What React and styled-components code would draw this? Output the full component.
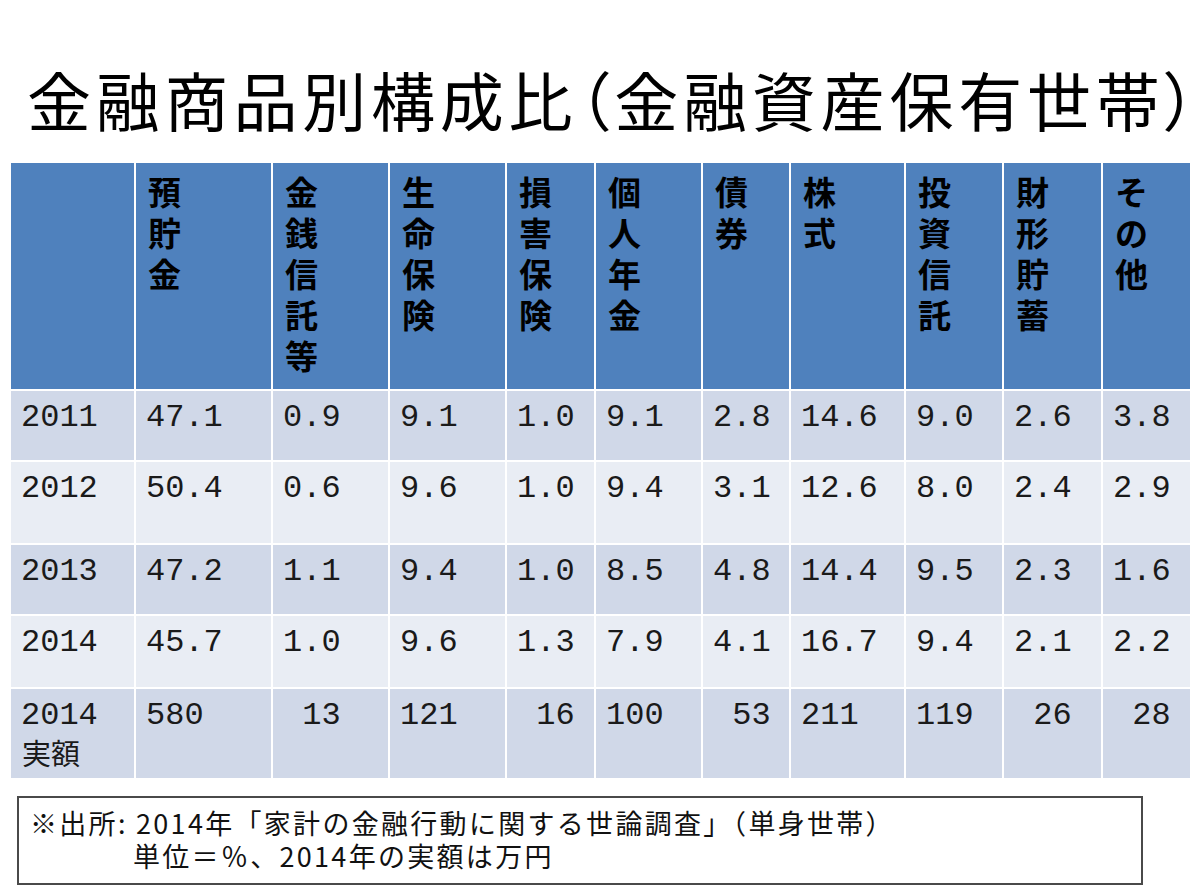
import React from "react";
import styled, { createGlobalStyle } from "styled-components";

const GlobalStyle = createGlobalStyle`
  html, body { margin: 0; padding: 0; background: #ffffff; }
  body { font-family: "Noto Sans CJK JP", "Noto Sans", sans-serif; color: #000; }
`;

const Page = styled.div`
  width: 1200px;
  height: 893px;
  overflow: hidden;
  display: flex;
  flex-direction: column;
`;

const Title = styled.h1`
  margin: 0 0 33px 0;
  padding: 66px 0 0 27px;
  font-family: "Noto Sans CJK JP", sans-serif;
  font-weight: 400;
  font-size: 64px;
  line-height: 64px;
  letter-spacing: 4.8px;
  font-feature-settings: "palt" 1;
  white-space: nowrap;
  color: #000;
`;

const TitleEnd = styled.span`
  letter-spacing: 0;
`;

const Table = styled.div`
  margin-left: 11px;
  width: 1179px;
  display: grid;
  grid-template-columns: 123px 135px 115px 115px 87px 105px 86px 113px 96px 97px 87px;
  grid-template-rows: 226px 69px 81px 69px 71px 89px;
  column-gap: 2px;
  row-gap: 2px;
`;

const HeadCell = styled.div`
  background: #4f81bd;
  padding: 8px 0 0 12px;
`;

const HeadLabel = styled.div`
  display: flex;
  flex-direction: column;
  font-family: "Noto Sans CJK JP", sans-serif;
  font-weight: 700;
  font-size: 33px;
  line-height: 41px;
  color: #000;
`;

const Cell = styled.div`
  background: ${(p) => (p.$band ? "#d0d8e8" : "#e9edf4")};
  padding: 9px 0 0 10px;
  font-family: "Liberation Mono", "Noto Sans CJK JP", monospace;
  font-size: 32px;
  line-height: 36px;
  white-space: pre;
  color: #1a1a1a;
`;

const SubLabel = styled.div`
  font-family: "Noto Sans CJK JP", sans-serif;
  font-size: 29px;
  line-height: 36px;
  margin-left: 1px;
`;

const Note = styled.div`
  margin: 18px 0 0 17px;
  width: 1126px;
  height: 89px;
  box-sizing: border-box;
  border: 2px solid #4a4a4a;
  padding: 8px 0 0 11px;
  font-family: "Noto Sans CJK JP", sans-serif;
  font-size: 27px;
  line-height: 33px;
  letter-spacing: 2.3px;
  color: #111;
`;

const NoteLine = styled.div`
  padding-left: ${(p) => p.$indent || 0}px;
  white-space: nowrap;
`;

const headers = ["", "預貯金", "金銭信託等", "生命保険", "損害保険", "個人年金", "債券", "株式", "投資信託", "財形貯蓄", "その他"];

const rows = [
  { year: "2011", vals: ["47.1", "0.9", "9.1", "1.0", "9.1", "2.8", "14.6", "9.0", "2.6", "3.8"] },
  { year: "2012", vals: ["50.4", "0.6", "9.6", "1.0", "9.4", "3.1", "12.6", "8.0", "2.4", "2.9"] },
  { year: "2013", vals: ["47.2", "1.1", "9.4", "1.0", "8.5", "4.8", "14.4", "9.5", "2.3", "1.6"] },
  { year: "2014", vals: ["45.7", "1.0", "9.6", "1.3", "7.9", "4.1", "16.7", "9.4", "2.1", "2.2"] },
  { year: "2014", sub: "実額", vals: ["580", " 13", "121", " 16", "100", " 53", "211", "119", " 26", " 28"] },
];

export default function App() {
  return (
    <Page>
      <GlobalStyle />
      <Title>
        金融商品別構成比（金融資産保有世帯<TitleEnd>）</TitleEnd>
      </Title>
      <Table>
        {headers.map((h, i) => (
          <HeadCell key={"h" + i}>
            <HeadLabel>
              {h.split("").map((c, j) => (
                <span key={j}>{c}</span>
              ))}
            </HeadLabel>
          </HeadCell>
        ))}
        {rows.map((r, ri) => (
          <React.Fragment key={"r" + ri}>
            <Cell $band={ri % 2 === 0}>
              {r.year}
              {r.sub && <SubLabel>{r.sub}</SubLabel>}
            </Cell>
            {r.vals.map((v, vi) => (
              <Cell key={vi} $band={ri % 2 === 0}>
                {v}
              </Cell>
            ))}
          </React.Fragment>
        ))}
      </Table>
      <Note>
        <NoteLine>※出所: 2014年「家計の金融行動に関する世論調査」（単身世帯）</NoteLine>
        <NoteLine $indent={103}>単位＝％、2014年の実額は万円</NoteLine>
      </Note>
    </Page>
  );
}
